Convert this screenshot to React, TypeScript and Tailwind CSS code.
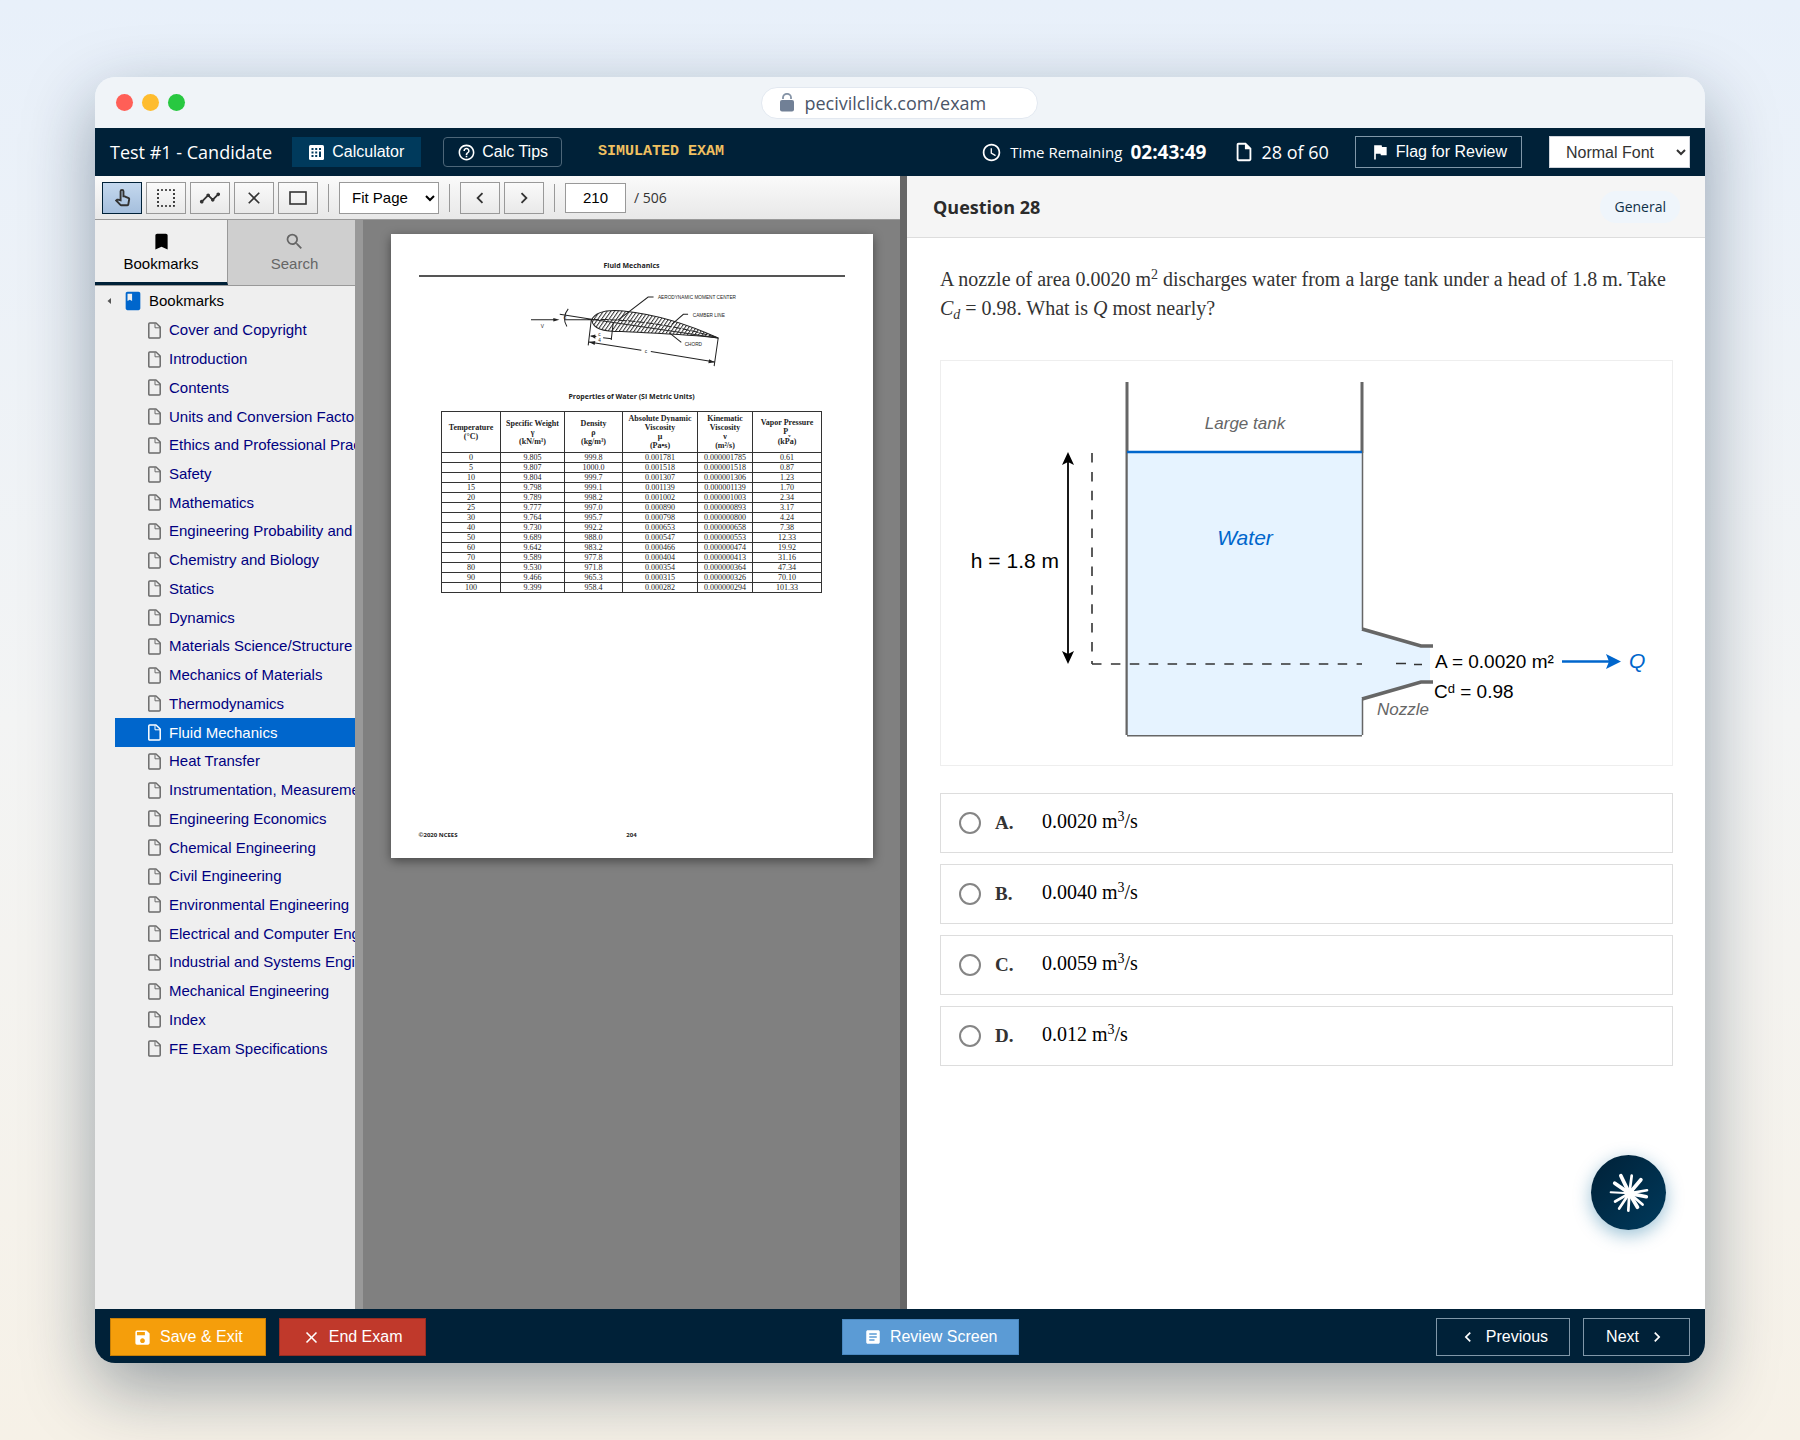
import React, { useState } from 'react';
import {
  MdAccessTime, MdArticle, MdBook, MdBookmark, MdChevronLeft, MdChevronRight, MdClose, MdFlag, MdHelpOutline,
  MdOutlineInsertDriveFile, MdOutlinePanToolAlt, MdSave, MdSearch, MdTimeline,
} from 'react-icons/md';

const BOOKMARKS = [
  'Cover and Copyright', 'Introduction', 'Contents', 'Units and Conversion Factors', 'Ethics and Professional Practice',
  'Safety', 'Mathematics', 'Engineering Probability and Statistics', 'Chemistry and Biology', 'Statics', 'Dynamics',
  'Materials Science/Structure of Matter', 'Mechanics of Materials', 'Thermodynamics', 'Fluid Mechanics', 'Heat Transfer',
  'Instrumentation, Measurement, and Control', 'Engineering Economics', 'Chemical Engineering', 'Civil Engineering',
  'Environmental Engineering', 'Electrical and Computer Engineering', 'Industrial and Systems Engineering',
  'Mechanical Engineering', 'Index', 'FE Exam Specifications',
];

const WATER_ROWS = [
  ['0', '9.805', '999.8', '0.001781', '0.000001785', '0.61'],
  ['5', '9.807', '1000.0', '0.001518', '0.000001518', '0.87'],
  ['10', '9.804', '999.7', '0.001307', '0.000001306', '1.23'],
  ['15', '9.798', '999.1', '0.001139', '0.000001139', '1.70'],
  ['20', '9.789', '998.2', '0.001002', '0.000001003', '2.34'],
  ['25', '9.777', '997.0', '0.000890', '0.000000893', '3.17'],
  ['30', '9.764', '995.7', '0.000798', '0.000000800', '4.24'],
  ['40', '9.730', '992.2', '0.000653', '0.000000658', '7.38'],
  ['50', '9.689', '988.0', '0.000547', '0.000000553', '12.33'],
  ['60', '9.642', '983.2', '0.000466', '0.000000474', '19.92'],
  ['70', '9.589', '977.8', '0.000404', '0.000000413', '31.16'],
  ['80', '9.530', '971.8', '0.000354', '0.000000364', '47.34'],
  ['90', '9.466', '965.3', '0.000315', '0.000000326', '70.10'],
  ['100', '9.399', '958.4', '0.000282', '0.000000294', '101.33'],
];

const OPTIONS = [
  { id: 'A', value: '0.0020' },
  { id: 'B', value: '0.0040' },
  { id: 'C', value: '0.0059' },
  { id: 'D', value: '0.012' },
];

const LockIcon = () => (
  <svg width="14" height="19" viewBox="0 0 14 19" aria-hidden="true">
    <path d="M3 6V4.5A4 3.7 0 0 1 11 4.5V6" fill="none" stroke="#8593a6" strokeWidth="1.8" />
    <rect y="7" width="14" height="11.5" rx="2" fill="#718096" />
  </svg>
);

const CalculatorIcon = () => (
  <svg width="15" height="15" viewBox="0 0 15 15" aria-hidden="true">
    <rect width="15" height="15" rx="1.5" fill="#fff" />
    <g fill="#003a5c">
      <rect x="2.5" y="3" width="2" height="2" /><rect x="6.2" y="3" width="2" height="2" /><rect x="10" y="3" width="2" height="2" />
      <rect x="2.5" y="6.5" width="2" height="2" /><rect x="6.2" y="6.5" width="2" height="2" /><rect x="10" y="6.5" width="2" height="5.5" />
      <rect x="2.5" y="10" width="2" height="2" /><rect x="6.2" y="10" width="2" height="2" />
    </g>
  </svg>
);

const PageIcon = () => (
  <svg width="13" height="17" viewBox="0 0 13 17" className="shrink-0" fill="none" stroke="currentColor" strokeLinejoin="round" aria-hidden="true">
    <path d="M1.7 1H8L12.2 5V15Q12.2 16 11.2 16H1.7Q0.8 16 0.8 15V2Q0.8 1 1.7 1Z" strokeWidth="1.5" />
    <path d="M7 1.5V5.8H12" strokeWidth="1" />
  </svg>
);

const StarburstIcon = () => (
  <svg width="40" height="40" viewBox="116 112 118 118" stroke="#fff" strokeLinecap="round" aria-hidden="true">
    <g strokeWidth="11">
      <path d="M176 172L151 120" /><path d="M176 172L133 142" /><path d="M176 172L210 132" />
      <path d="M176 172L200 213" /><path d="M176 172L226 182" />
    </g>
    <g strokeWidth="8">
      <path d="M176 172L183 120" /><path d="M176 172L228 163" /><path d="M176 172L215 205" />
      <path d="M176 172L173 223" /><path d="M176 172L146 217" /><path d="M176 172L134 196" />
    </g>
    <path d="M176 172L121 169" strokeWidth="6" />
    <circle cx="177" cy="172" r="15" fill="#fff" stroke="none" />
  </svg>
);

const TopBar = () => (
  <header className="flex h-12 shrink-0 items-center justify-between bg-[#002138] px-[15px] text-white">
    <div className="flex items-center">
      <h1 className="font-['Open_Sans',sans-serif] text-[18px] leading-6">Test #1 - Candidate</h1>
      <button className="ml-5 flex h-[30px] items-center gap-2 bg-[#003a5c] px-[17px] text-base leading-5">
        <CalculatorIcon /> Calculator
      </button>
      <button className="ml-[22px] flex h-[30px] items-center gap-1.5 rounded-sm border border-[#4d6678] px-[13px] text-base leading-5">
        <MdHelpOutline size={19} /> Calc Tips
      </button>
      <span className="ml-9 font-['Liberation_Mono',monospace] text-[15px] font-bold leading-5 text-[#f0c060]">SIMULATED EXAM</span>
    </div>
    <div className="flex items-center font-['Open_Sans',sans-serif]">
      <MdAccessTime size={21} />
      <span className="ml-2 text-[15px] leading-6">Time Remaining</span>
      <span className="ml-2 text-[19px] font-bold leading-6">02:43:49</span>
      <MdOutlineInsertDriveFile size={22} className="ml-[27px]" />
      <span className="ml-1.5 text-[18px] leading-6">28 of 60</span>
      <button className="ml-[26px] flex h-8 items-center gap-1.5 border border-[#8097a8] px-3.5 font-['Liberation_Sans',Arial,sans-serif] text-base leading-5">
        <MdFlag size={20} /> Flag for Review
      </button>
      <select aria-label="Font size" className="ml-[27px] h-8 w-[141px] border border-gray-300 bg-white pl-3 font-['Liberation_Sans',Arial,sans-serif] text-base text-[#333]">
        <option>Normal Font</option>
      </select>
    </div>
  </header>
);

const ToolButton = ({ label, active, children }: { label: string; active?: boolean; children: React.ReactNode }) => (
  <button
    aria-label={label}
    className={`flex h-8 w-10 items-center justify-center border ${active ? 'border-[#002138] bg-linear-to-b from-[#c4d8ee] to-[#a5bfdd]' : 'border-[#999] bg-linear-to-b from-[#fafafa] to-[#e9e9e9]'}`}
  >
    {children}
  </button>
);

const Divider = () => <div className="mx-1.5 h-7 w-px bg-[#999]" />;

const Toolbar = () => (
  <div className="flex h-11 shrink-0 items-center gap-1 border-b border-[#999] bg-linear-to-b from-[#fafafa] to-[#e8e8e8] pl-[7px] text-[#333]">
    <ToolButton label="Pan" active><MdOutlinePanToolAlt size={23} /></ToolButton>
    <ToolButton label="Select area">
      <svg width="18" height="18" viewBox="0 0 18 18" aria-hidden="true">
        <rect x="1" y="1" width="16" height="16" fill="none" stroke="#222" strokeWidth="1.7" strokeDasharray="2 2" strokeDashoffset="1" />
      </svg>
    </ToolButton>
    <ToolButton label="Draw line"><MdTimeline size={22} /></ToolButton>
    <ToolButton label="Clear"><MdClose size={20} /></ToolButton>
    <ToolButton label="Rectangle">
      <svg width="18" height="14" viewBox="0 0 18 14" aria-hidden="true">
        <rect x="1" y="1" width="16" height="12" fill="none" stroke="#333" strokeWidth="1.6" />
      </svg>
    </ToolButton>
    <Divider />
    <select aria-label="Zoom" className="h-8 w-[100px] border border-[#999] bg-white pl-2 text-[15px] text-black">
      <option>Fit Page</option>
    </select>
    <Divider />
    <ToolButton label="Previous page"><MdChevronLeft size={22} /></ToolButton>
    <ToolButton label="Next page"><MdChevronRight size={22} /></ToolButton>
    <Divider />
    <input aria-label="Page number" defaultValue="210" className="h-[30px] w-[61px] border border-[#999] bg-white text-center text-[15px] text-black" />
    <span className="ml-1 font-['Open_Sans',sans-serif] text-sm leading-5">/ 506</span>
  </div>
);

const Sidebar = ({ selected, onSelect }: { selected: string; onSelect: (name: string) => void }) => (
  <nav className="w-[260px] shrink-0 overflow-hidden bg-[#efefef] text-[15px] leading-5">
    <div className="flex h-[66px] border-b border-[#999]">
      <button className="flex w-[133px] shrink-0 flex-col items-center gap-0.5 border-b-3 border-r border-b-[#002138] border-r-[#999] pt-[11px] text-black">
        <MdBookmark size={21} /> Bookmarks
      </button>
      <button className="flex w-[133px] shrink-0 flex-col items-center gap-0.5 bg-[#cfcfcf] pt-[11px] text-[#666]">
        <MdSearch size={21} /> Search
      </button>
    </div>
    <div className="flex h-[30px] items-center pl-3 text-black">
      <svg width="4" height="6" viewBox="0 0 4 6" aria-hidden="true"><path d="M4 0V6L0.5 3Z" fill="#555" /></svg>
      <MdBook size={22} className="ml-[11px] mr-[5px] text-[#0066cc]" />
      Bookmarks
    </div>
    {/* rows share the height evenly */}
    <ul className="grid h-[747px] auto-rows-fr pl-5">
      {BOOKMARKS.map((name) => (
        <li key={name} className="min-w-0">
          <a
            href="#"
            onClick={(e) => { e.preventDefault(); onSelect(name); }}
            className={`flex h-full items-center gap-2 overflow-hidden whitespace-nowrap pl-[33px] ${name === selected ? 'bg-[#0066cc] text-white' : 'text-[#000080]'}`}
          >
            <span className={name === selected ? 'text-white' : 'text-[#6b6b6b]'}><PageIcon /></span>
            {name}
          </a>
        </li>
      ))}
    </ul>
  </nav>
);

const AirfoilFigure = () => (
  <svg viewBox="0 0 768 295" className="mx-auto block h-[100px] w-[260px]" fill="none" stroke="#222" strokeWidth="3">
    <defs>
      <pattern id="hatch" width="9" height="9" patternUnits="userSpaceOnUse" patternTransform="rotate(35)">
        <path d="M0 0V9" stroke="#333" strokeWidth="6" />
      </pattern>
    </defs>
    <path d="M62 120H134M160 120H241M147 104L241 119L615 174" />
    <path d="M172 88Q152 113 168 140" />
    <path d="M146 120L128 115V125Z" fill="#222" stroke="none" />
    <path d="M241 121C252 96 290 90 335 94C430 104 530 135 615 174C520 162 420 160 330 155C270 155 246 146 241 121Z" fill="url(#hatch)" />
    <path d="M241 120C320 116 480 132 615 174" strokeDasharray="22 5" />
    <path d="M240 121L231 196M305 128L299 180M615 174L603 257" />
    <path d="M238 168L255 170M275 173L300 176M233 186L388 210M416 214L605 245" />
    <path d="M233 186L252 183L250 195ZM605 246L588 237L586 249ZM238 168L252 164V176Z" fill="#222" stroke="none" />
    <path d="M318 122L408 53H424M478 134L512 104H526M470 158L506 187" />
    <g fill="#222" stroke="none" className="font-['Liberation_Sans',Arial,sans-serif] text-[14px]">
      <text x="437" y="59">AERODYNAMIC MOMENT CENTER</text>
      <text x="540" y="111">CAMBER LINE</text>
      <text x="516" y="198">CHORD</text>
      <text x="91" y="145">V</text>
      <text x="398" y="217">c</text>
      <text x="261" y="167">c</text>
      <text x="261" y="185">4</text>
      <text x="158" y="119">α</text>
    </g>
  </svg>
);

const HandbookPage = () => (
  <article className="flex h-[624px] w-[482px] shrink-0 flex-col bg-white px-7 text-[#222] shadow-[0_3px_10px_rgba(0,0,0,0.45)]">
    <div className="border-b-2 border-[#555] pb-[3px] pt-[26px] text-center font-['Open_Sans',sans-serif] text-[7px] font-bold leading-3">Fluid Mechanics</div>
    <div className="pl-4 pt-0.5"><AirfoilFigure /></div>
    <h2 className="mb-2 mt-3 text-center font-['Open_Sans',sans-serif] text-[7px] font-bold leading-3">Properties of Water (SI Metric Units)</h2>
    <table className="mx-auto w-[380px] table-fixed border-collapse text-center font-['Liberation_Serif','Times_New_Roman',serif] text-[8px] leading-[9px] [&_td]:border [&_td]:border-[#333] [&_th]:border [&_th]:border-[#333]">
      <colgroup>
        <col className="w-[59px]" /><col className="w-[64px]" /><col className="w-[58px]" />
        <col className="w-[75px]" /><col className="w-[55px]" /><col className="w-[69px]" />
      </colgroup>
      <thead>
        <tr className="h-[41px]">
          <th>Temperature<br />(°C)</th>
          <th>Specific Weight<br />γ<br />(kN/m³)</th>
          <th>Density<br />ρ<br />(kg/m³)</th>
          <th>Absolute Dynamic<br />Viscosity<br />μ<br />(Pa•s)</th>
          <th>Kinematic<br />Viscosity<br />ν<br />(m²/s)</th>
          <th>Vapor Pressure<br />P<span className="align-sub text-[5px] leading-none">v</span><br />(kPa)</th>
        </tr>
      </thead>
      <tbody>
        {WATER_ROWS.map((row) => (
          <tr key={row[0]} className="h-2.5">
            {row.map((cell, i) => <td key={i}>{cell}</td>)}
          </tr>
        ))}
      </tbody>
    </table>
    <div className="mt-auto grid grid-cols-3 pb-[17px] font-['Open_Sans',sans-serif] text-[6px] font-bold leading-3">
      <span>©2020 NCEES</span>
      <span className="text-center">204</span>
    </div>
  </article>
);

const TankDiagram = () => (
  <svg viewBox="0 1 731 404" className="block w-full" fill="none" role="img" aria-label="Large tank discharging water through a nozzle">
    <g stroke="#666" strokeWidth="3">
      <path d="M186 22V375M421 22V93" />
      <path d="M186 375H421" />
    </g>
    <rect x="186" y="93" width="235" height="282" fill="#e6f3ff" />
    <path d="M421 269L480 286H489V322H480L421 339Z" fill="#e6f3ff" />
    <path d="M186 93V375" stroke="#666" strokeWidth="1.5" />
    <path d="M421.5 93V269M421.5 339V375" stroke="#666" strokeWidth="1.5" />
    <path d="M186 92H421" stroke="#0066cc" strokeWidth="2.5" />
    <path d="M421 269L480 286H492M421 339L480 322H492" stroke="#666" strokeWidth="3.5" />
    <path d="M151 93V304" stroke="#333" strokeWidth="1.6" strokeDasharray="9.5 9.4" />
    <path d="M151 304H421" stroke="#333" strokeWidth="1.6" strokeDasharray="9.5 9.4" />
    <path d="M455 303.5H465M473 304.5H481" stroke="#333" strokeWidth="1.6" />
    <path d="M127 102V296" stroke="#000" strokeWidth="1.8" />
    <path d="M127 92L133 105L127 102L121 105ZM127 304L133 291L127 294L121 291Z" fill="#000" />
    <path d="M621 301.5H668" stroke="#0066cc" strokeWidth="2.5" />
    <path d="M680 301.5L665 294L668 301.5L665 309Z" fill="#0066cc" />
    <g className="font-['Liberation_Sans',Arial,sans-serif]">
      <text x="304" y="69" textAnchor="middle" fill="#666" className="text-[17px] italic">Large tank</text>
      <text x="304" y="185" textAnchor="middle" fill="#0066cc" className="text-[21px] italic">Water</text>
      <text x="118" y="208" textAnchor="end" fill="#000" className="text-[21px]">h = 1.8 m</text>
      <text x="494" y="308" fill="#000" className="text-[19px]">A = 0.0020 m²</text>
      <text x="493" y="338" fill="#000" className="text-[19px]">C<tspan dy="-5" className="text-[13px]">d</tspan><tspan dy="5"> = 0.98</tspan></text>
      <text x="436" y="355" fill="#666" className="text-[17px] italic">Nozzle</text>
      <text x="688" y="308" fill="#0066cc" className="text-[21px] italic">Q</text>
    </g>
  </svg>
);

const Num = ({ children }: { children: React.ReactNode }) => (
  <span className="whitespace-nowrap font-['Liberation_Serif','Times_New_Roman',serif] text-[20px] leading-none">{children}</span>
);

const QuestionPanel = () => {
  const [answer, setAnswer] = useState('');

  return (
    <section className="relative flex min-w-0 flex-1 flex-col bg-white">
      <div className="flex h-[62px] shrink-0 items-center justify-between border-b border-[#ddd] bg-[#f5f5f5] pl-[26px] pr-[25px] font-['Open_Sans',sans-serif]">
        <h2 className="text-[18px] font-bold leading-6 text-[#2b2b2b]">Question 28</h2>
        <span className="rounded-full bg-[#eff5fb] px-3.5 py-1.5 text-sm leading-5 text-[#0f3048]">General</span>
      </div>
      <div className="pl-[33px] pr-8 pt-[27px]">
        <p className="font-['Liberation_Serif','Times_New_Roman',serif] text-[20px] leading-[29px] text-[#333]">
          A nozzle of area <Num>0.0020 m<sup className="text-[14px]">2</sup></Num> discharges water from a large tank under a head of <Num>1.8 m</Num>. Take{' '}
          <Num><i>C</i><sub className="text-[14px] italic">d</sub> = 0.98</Num>. What is <Num><i>Q</i></Num> most nearly?
        </p>
        <figure className="mt-[37px] border border-[#eee]"><TankDiagram /></figure>
        <fieldset className="mt-[27px] flex flex-col gap-[11px]">
          <legend className="sr-only">Answer choices</legend>
          {OPTIONS.map((o) => (
            <label key={o.id} className="flex h-[60px] items-center border border-[#ddd] pl-[18px] font-['Liberation_Serif','Times_New_Roman',serif]">
              <input
                type="radio"
                name="answer"
                checked={answer === o.id}
                onChange={() => setAnswer(o.id)}
                className="size-[22px] appearance-none rounded-full border-2 border-[#858585] bg-white checked:border-[6px] checked:border-[#0066cc]"
              />
              <span className="ml-3.5 w-[47px] text-[19px] font-bold leading-6 text-[#333]">{o.id}.</span>
              <span className="text-black"><Num>{o.value} m<sup className="text-[14px]">3</sup>/s</Num></span>
            </label>
          ))}
        </fieldset>
      </div>
      <button aria-label="Open assistant" className="absolute bottom-[79px] right-[39px] flex size-[75px] items-center justify-center rounded-full bg-linear-to-br from-[#002138] to-[#003a5c] shadow-[0_5px_18px_rgba(0,100,150,0.4)]">
        <StarburstIcon />
      </button>
    </section>
  );
};

const BottomBar = () => (
  <footer className="flex h-[54px] shrink-0 items-center justify-between bg-[#002138] px-[15px] pt-0.5 text-base leading-5 text-white">
    <div className="flex gap-[13px]">
      <button className="flex h-[38px] items-center gap-2 border border-[#c77f08] bg-[#f59e0b] px-[22px]"><MdSave size={19} /> Save &amp; Exit</button>
      <button className="flex h-[38px] items-center gap-2 border border-[#962d22] bg-[#c0392b] px-[22px]"><MdClose size={19} /> End Exam</button>
    </div>
    <button className="flex h-9 items-center gap-2 border border-[#4a88c0] bg-[#5b9bd5] px-[21px]"><MdArticle size={18} /> Review Screen</button>
    <div className="flex gap-[13px]">
      <button className="flex h-[38px] items-center gap-2 border border-[#8097a8] px-[21px]"><MdChevronLeft size={20} /> Previous</button>
      <button className="flex h-[38px] items-center gap-2 border border-[#8097a8] px-[22px]">Next <MdChevronRight size={20} /></button>
    </div>
  </footer>
);

export default function App() {
  const [chapter, setChapter] = useState('Fluid Mechanics');

  return (
    <div className="flex min-h-screen bg-linear-to-b from-[#e8f0fa] via-[#f3f4f4] to-[#f6f1e7] px-[95px] py-[77px] font-['Liberation_Sans',Arial,sans-serif]">
      <div className="flex min-w-0 flex-1 flex-col overflow-hidden rounded-[20px] shadow-[0_25px_70px_rgba(10,35,60,0.4)]">
        {/* Browser chrome */}
        <div className="grid h-[51px] shrink-0 grid-cols-3 items-center bg-[#f0f4f8]">
          <div className="flex gap-[9px] pl-[21px]">
            <span className="size-[17px] rounded-full bg-[#ff5f57]" />
            <span className="size-[17px] rounded-full bg-[#febc2e]" />
            <span className="size-[17px] rounded-full bg-[#28c840]" />
          </div>
          <div className="flex h-8 w-[277px] items-center gap-2.5 justify-self-center rounded-full border border-[#e2e8f0] bg-white pl-[18px] font-['Open_Sans',sans-serif] text-[18px] leading-6 text-[#4a5568]">
            <LockIcon /> pecivilclick.com/exam
          </div>
        </div>
        <TopBar />
        <div className="flex flex-1">
          <div className="flex w-[805px] shrink-0 flex-col">
            <Toolbar />
            <div className="flex flex-1">
              <Sidebar selected={chapter} onSelect={setChapter} />
              <div className="w-2 bg-[#999]" />
              <div className="flex flex-1 justify-center bg-[#808080] pt-3.5"><HandbookPage /></div>
            </div>
          </div>
          <div className="w-[7px] shrink-0 bg-[#666]" />
          <QuestionPanel />
        </div>
        <BottomBar />
      </div>
    </div>
  );
}
